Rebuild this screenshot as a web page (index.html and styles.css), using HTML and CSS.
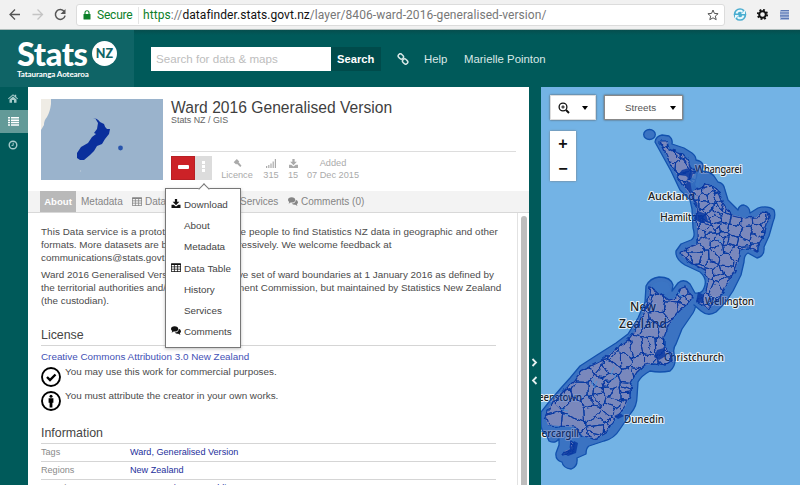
FILE: index.html
```html
<!DOCTYPE html>
<html lang="en">
<head>
<meta charset="utf-8">
<title>Ward 2016 Generalised Version</title>
<link rel="stylesheet" href="styles.css">
</head>
<body>
<svg class="defs" width="0" height="0">
  <symbol id="download" viewBox="0 0 16 16"><path d="M6 0h4v5h4L8 11 2 5h4zM0 10h4l4 3.5 4-3.5h4v6H0z"/></symbol>
  <symbol id="table" viewBox="0 0 16 14"><path fill-rule="evenodd" d="M1 0h14q1 0 1 1v12q0 1-1 1H1q-1 0-1-1V1q0-1 1-1zM1.200 3v2.500h3.500V3zm4.700 0v2.500h4.200V3zm5.400 0v2.500h3.500V3zM1.200 6.600v2.500h3.500V6.600zm4.700 0v2.500h4.200V6.600zm5.400 0v2.500h3.500V6.600zM1.200 10.200v2.600h3.500v-2.600zm4.700 0v2.600h4.200v-2.600zm5.400 0v2.600h3.500v-2.600z"/></symbol>
  <symbol id="comments" viewBox="0 0 18 15"><path d="M6.500 0C10.500 0 13 2 13 4.800S10.500 9.500 6.500 9.500L4.800 9.300Q3 11 .8 11 2.400 9.800 2.200 8.400 0 7 0 4.800C0 2 2.500 0 6.500 0zM14 4.500Q18 6 18 8.700 18 11 15.900 12.200 15.900 13.600 17.300 14.800 15 14.800 13.300 13.200 9 13.800 6.800 11 14 11 14 4.500z"/></symbol>
</svg>

<div class="browser">
  <svg class="nav-icons" width="72" height="30" viewBox="0 0 72 30" fill="none" stroke-width="1.300">
    <path stroke="#555" d="M20 14.500H10M15 9.500l-5 5 5 5"/>
    <path stroke="#c4c4c4" d="M32.500 14.500h10M37.500 9.500l5 5-5 5"/>
    <path stroke="#555" stroke-width="1.500" d="M64.300 11.600a4.900 4.900 0 1 0 .8 4"/>
    <path fill="#555" d="M65.500 9v5h-5z"/>
  </svg>
  <div class="address">
    <svg width="8" height="10" viewBox="0 0 8 10"><rect x=".5" y="4" width="7" height="5.500" rx=".5" fill="#0b8029"/><path d="M2 4.500V2.700a2 2 0 0 1 4 0v1.800" fill="none" stroke="#0b8029" stroke-width="1.100"/></svg>
    <span class="secure">Secure</span>
    <span class="url"><b>https</b>://<i>datafinder.stats.govt.nz</i>/layer/8406-ward-2016-generalised-version/</span>
    <svg class="star" width="12" height="12" viewBox="0 0 12 12"><path d="M6 1l1.400 3.400 3.700.3-2.800 2.400.9 3.600L6 8.800l-3.200 1.900.9-3.600L.9 4.700l3.700-.3z" fill="none" stroke="#555" stroke-width="1"/></svg>
  </div>
  <svg class="extensions" width="72" height="30" viewBox="728 0 72 30">
    <circle cx="740" cy="14.500" r="6.300" fill="#4aadd0"/>
    <path d="M736.500 13.500q1-3.500 4.500-2.700l1.500 1M743.500 15.500q-1 3.500-4.500 2.700l-1.500-1" fill="none" stroke="#e8f8fc" stroke-width="2"/>
    <path d="M741 14l4-4v4zM739 15l-4 4v-4z" fill="#e8f8fc"/>
    <circle cx="762.500" cy="14.500" r="3.300" fill="none" stroke="#111" stroke-width="2"/>
    <circle cx="762.500" cy="14.500" r="4.700" fill="none" stroke="#111" stroke-width="1.800" stroke-dasharray="1.850 1.841"/>
    <path d="M780 10h9v10h-9z" fill="#a9b9da"/>
    <path d="M781 10.500h8M780 13h9M780 15.800h9M781 18.500h8" stroke="#5b78b5" stroke-width="1.200"/>
  </svg>
</div>

<header class="header">
  <div class="brand">
    <div class="brand-row"><span class="stats">Stats</span><span class="nz">NZ</span></div>
    <div class="brand-sub">Tatauranga Aotearoa</div>
  </div>
  <div class="search-box">Search for data &amp; maps</div>
  <div class="search-button">Search</div>
  <svg class="link" width="12" height="12" viewBox="0 0 12 12" fill="none" stroke="#d5e6e5" stroke-width="1.500"><rect x="1" y="1.500" width="5.600" height="4.200" rx="2" transform="rotate(45 4 3.600)"/><rect x="5.400" y="6.300" width="5.600" height="4.200" rx="2" transform="rotate(45 8 8.400)"/></svg>
  <span class="help">Help</span>
  <span class="user">Marielle Pointon</span>
</header>

<div class="workspace">
  <nav class="rail">
    <div class="rail-item"><svg width="10" height="9" viewBox="0 0 10 9" fill="#a7cbca"><path d="M5 .3l1.800 1.500V.7h1.400V3L10 4.600l-.6.600L5 1.600.6 5.200 0 4.600zM5 2.500l3.500 2.900v3.300H6V6H4v2.700H1.500V5.400z"/></svg></div>
    <div class="rail-item active"><svg width="11" height="9" viewBox="0 0 11 9" fill="#fff"><path d="M0 0h2v1.500H0zm3 0h8v1.500H3zM0 2.400h2v1.500H0zm3 0h8v1.500H3zM0 4.800h2v1.500H0zm3 0h8v1.500H3zM0 7.200h2v1.500H0zm3 0h8v1.500H3z"/></svg></div>
    <div class="rail-item"><svg width="10" height="10" viewBox="0 0 10 10" fill="none" stroke="#a7cbca"><circle cx="5" cy="5" r="3.800" stroke-width="1.400"/><path d="M5.200 2.700v2.700H3.500"/></svg></div>
  </nav>

  <main class="panel">
    <section class="summary">
      <svg class="thumb" width="122" height="81" viewBox="0 0 122 81">
        <rect width="122" height="81" fill="#9ab3cc"/>
        <path d="M0 0h10v5q-1 8-4 13-3 3-3 8l-3 5z" fill="#efece5"/>
        <path d="M52 19q4 0 7 4l4 2q1 4 3 5l3 0-1 5-4 5-3 5-5 2-3 5-4 4-6 5-4 0-3-2 0-5 4-6 7-4 4-6 4-3-2-1 3-4 1-6-3-5z" fill="#0a2f9c"/>
        <circle cx="79.500" cy="49" r="2.400" fill="#2854ac"/><circle cx="39.500" cy="72" r=".7" fill="#bccbd9"/>
      </svg>
      <div class="facts">
        <h1>Ward 2016 Generalised Version</h1>
        <div class="owner">Stats NZ / GIS</div>
        <div class="meta">
          <div class="remove"><span></span></div>
          <div class="more"><i></i><i></i><i></i></div>
          <div class="stat licence"><svg width="10" height="10" viewBox="0 0 10 10"><path d="M4.800 0L7.500 2.700l-.8.800.6.600L10 7.500 8.600 9 5.500 5.900l-.7-.6-.7.800L1.300 3.500l.8-.8z"/></svg><span>Licence</span></div>
          <div class="stat views"><svg width="10" height="9" viewBox="0 0 10 9"><path d="M0 7h1.200v2H0zM2.200 6h1.200v3H2.200zM4.400 4.500h1.200V9H4.400zM6.600 2.500h1.200V9H6.600zM8.800 0H10v9H8.800z"/></svg><span>315</span></div>
          <div class="stat downloads"><svg width="9" height="9"><use href="#download"/></svg><span>15</span></div>
          <div class="stat added"><span>Added</span><span>07 Dec 2015</span></div>
        </div>
      </div>
    </section>

    <div class="tabs">
      <span class="tab current">About</span>
      <span class="tab t-meta">Metadata</span>
      <span class="tab t-data"><svg width="10" height="9"><use href="#table"/></svg>Data Table</span>
      <span class="tab t-serv">Services</span>
      <span class="tab t-comm"><svg width="10" height="9"><use href="#comments"/></svg>Comments (0)</span>
    </div>

    <div class="scroll">
      <div class="content">
        <p><span class="l1">This Data service is a prototype built to enable people to find Statistics NZ data in geographic and other</span><br><span>formats. More datasets are being added progressively. We welcome feedback at</span><br><span>communications@stats.govt.nz</span></p>
        <p><span>Ward 2016 Generalised Version is the definitive set of ward boundaries at 1 January 2016 as defined by</span><br><span>the territorial authorities and/or Local Government Commission, but maintained by Statistics New Zealand</span><br><span>(the custodian).</span></p>
        <h2 class="license">License</h2>
        <a class="cc">Creative Commons Attribution 3.0 New Zealand</a>
        <div class="term"><svg width="20" height="20" viewBox="0 0 20 20"><circle cx="10" cy="10" r="9" fill="#fff" stroke="#000" stroke-width="1.900"/><path d="M6 10l3 3 5.500-5.500" fill="none" stroke="#000" stroke-width="2.400"/></svg><span>You may use this work for commercial purposes.</span></div>
        <div class="term"><svg width="20" height="20" viewBox="0 0 20 20"><circle cx="10" cy="10" r="9" fill="#fff" stroke="#000" stroke-width="1.900"/><circle cx="10" cy="5.300" r="1.500"/><path d="M7.600 7.200h4.800v4.500h-1v4.800H8.600v-4.800h-1z"/></svg><span>You must attribute the creator in your own works.</span></div>
        <h2 class="information">Information</h2>
        <div class="row"><span>Tags</span><a>Ward, Generalised Version</a></div>
        <div class="row"><span>Regions</span><a>New Zealand</a></div>
        <div class="row"><span>Metadata</span><a>ISO 19115/19139, Dublin Core</a></div>
      </div>
      <div class="track"><div class="thumb-bar"></div></div>
    </div>

    <div class="menu">
      <div><svg width="10" height="9"><use href="#download"/></svg>Download</div>
      <div>About</div>
      <div>Metadata</div>
      <div><svg width="10" height="9"><use href="#table"/></svg>Data Table</div>
      <div>History</div>
      <div>Services</div>
      <div><svg width="10" height="9"><use href="#comments"/></svg>Comments</div>
    </div>
  </main>

  <div class="splitter">
    <svg width="7" height="9" viewBox="0 0 7 9"><path d="M1.500 1l3.500 3.500L1.500 8"/></svg>
    <svg width="7" height="9" viewBox="0 0 7 9"><path d="M5.500 1L2 4.500 5.500 8"/></svg>
  </div>

  <section class="map">
    <svg class="canvas" width="259" height="398" viewBox="541 87 259 398">
      <defs>
        <path id="north" d="M660 141L667 141 669 150 682 154 688 160 691 168 697 174 694 186 700 190 706 184 718 190 721 199 726 208 733 215 745 218 757 217 761 212 768 213 770 218 766 224 763 237 757 247 757 252 749 248 740 250 738 262 734 273 725 288 718 300 708 309 698 302 699 298 706 292 708 280 704 270 692 263 682 256 681 253 686 248 697 244 697 230 696 217 697 205 688 192 680 180 670 163 664 150z"/>
        <path id="south" d="M686 286L692 298 686 305 675 315 668 327 664 337 664 346 670 353 671 361 665 365 655 363 645 365 637 372 631 382 630 395 625 407 617 417 610 425 606 433 595 439 583 436 575 427 560 426 548 425 545 417 550 406 562 393 575 380 580 372 600 362 615 350 628 340 637 328 641 318 647 305 649 295 650 286 660 294 669 300 676 298 680 288z"/>
        <path id="stewart" d="M571 441L575 444 575 450 570 454 562 455 565 451 570 449z"/>
        <clipPath id="land"><use href="#north"/><use href="#south"/><use href="#stewart"/></clipPath>
        <filter id="rough" x="-5%" y="-5%" width="110%" height="110%"><feTurbulence type="fractalNoise" baseFrequency=".13" numOctaves="2" seed="4"/><feDisplacementMap in="SourceGraphic" scale="6" xChannelSelector="R" yChannelSelector="G"/></filter>
      </defs>
      <rect x="541" y="87" width="259" height="398" fill="#73b3e5"/>
      <g fill="#f0dcd8"><use href="#north"/><use href="#south"/><use href="#stewart"/></g>
      <g class="places">
        <text x="695" y="173" textLength="47">Whangarei</text>
        <text class="big" x="648" y="200" textLength="47">Auckland</text>
        <text class="mid" x="660" y="221" textLength="44">Hamilton</text>
        <text x="705" y="305" textLength="49">Wellington</text>
        <text class="large" x="630" y="311" textLength="26">New</text>
        <text class="large" x="619" y="328" textLength="48">Zealand</text>
        <text x="664" y="361" textLength="60">Christchurch</text>
        <text x="624" y="423" textLength="40">Dunedin</text>
        <text x="525" y="401" textLength="57">Queenstown</text>
        <text x="527" y="437" textLength="52">Invercargill</text>
      </g>
      <g fill="#0333a0" fill-opacity=".5" stroke="#1251ae" stroke-width="1.300" stroke-linejoin="round">
        <path d="M655 142Q656 136 662 135L669 136Q673 139 672 144L684 148 692 153Q696 156 696 160 702 161 703 165L702 171Q711 172 714 176L718 182Q724 183 725 190L728 200 735 207 738 210Q739 205 744 205 750 207 750 213L758 208Q768 205 774 210 776 216 773 222L769 236 764 247Q765 256 757 258L748 253Q744 255 744 262L741 275 733 291 725 303 716 312Q708 317 701 311L694 305Q697 306 693 313L682 329 676 344Q672 349 675 357 676 366 670 371 660 373 650 371 641 376 638 382L637 397Q637 406 631 413L620 429Q614 439 604 441L589 446Q586 448 586 454L577 458Q578 467 571 469 563 468 562 462 555 460 556 453L559 445 559 439Q555 444 549 441L546 434Q541 432 541 423L541 412 549 402 561 388 570 378 580 366 597 355 616 343 628 334 638 318 645 302 646 286Q650 278 659 277 671 277 673 285L672 291 678 283Q684 278 690 284L695 293Q702 294 704 288 708 279 700 272L685 265Q675 259 676 251L681 244 691 240Q696 237 693 228L692 209 690 200 680 190 671 171z"/>
        <ellipse cx="649.500" cy="134.500" rx="5.800" ry="5"/>
      </g>
      <g filter="url(#rough)"><g clip-path="url(#land)"><path id="wards" fill="none" stroke="#0838a2" stroke-width="1"/></g>
      <g fill="none" stroke="#0838a2" stroke-width="1.200"><use href="#north"/><use href="#south"/><use href="#stewart"/></g></g>
      <g fill="#0838a2" opacity=".85"><path d="M689 168l4 5-2 8-5-5-8-1 4-5zM687 181l8 3 2 5-7 3-5-5zM698 211l8 3 2 7-7 2-7-4zM698 292l6 3-1 8-7-1zM657 350l7-2 2 8-7 4-5-3zM563 453l7-4 4-8 4 2-2 10-8 3zM614 416l6-3 4 3-6 3z"/></g>
      <path d="M690 180l7-9 4 3-2 12-7 6z" fill="#3b77c5" opacity=".8"/>
      <path d="M651 286q8-7 17-3l3 7-6 5-8-4z" fill="#3b77c5" opacity=".5"/>
      <g fill="none" stroke="#4f94d8" stroke-width="1.300" opacity=".8"><path d="M614 367l-3 8m5-1l-2 6M594 378l-2 7m5-4l-3 7M561 409l7 2M565 416l4-2M678 292l4 5M718 239l4 3"/></g>
    </svg>
    <div class="map-bar">
      <div class="map-button"><svg width="12" height="12" viewBox="0 0 12 12" fill="none" stroke="#111"><circle cx="5" cy="5" r="3.900" stroke-width="1.300"/><path d="M8 8l3 3" stroke-width="2"/><path d="M3.300 5h3.400M5 3.300v3.400"/></svg><b class="caret"></b></div>
      <div class="map-button streets"><span>Streets</span><b class="caret"></b></div>
    </div>
    <div class="zoomer"><span>+</span><span>−</span></div>
  </section>
</div>
<script src="wards.js"></script>
</body>
</html>
```

FILE: styles.css
```css
* { box-sizing: border-box; }
body { margin: 0; width: 800px; height: 485px; overflow: hidden; display: flex; flex-direction: column; background: #fff; font-family: "Liberation Sans", sans-serif; color: #4b4b4b; font-size: 9.87px; white-space: nowrap; }
svg { display: block; flex: none; }
.defs { position: absolute; }

.browser { height: 30px; flex: none; display: flex; background: #f1f1f1; border-bottom: 1px solid #aebcba; }
.address { width: 649px; height: 22px; margin: 4px 0 0 4px; padding-left: 6px; display: flex; align-items: center; background: #fff; border: 1px solid #dcdcdc; border-radius: 3px; font: 12px Roboto, sans-serif; }
.secure { color: #0b8029; margin-left: 6px; width: 42px; border-right: 1px solid #e5e5e5; line-height: 17px; letter-spacing: -0.2px; }
.url { color: #777; margin-left: 4px; letter-spacing: 0.06px; }
.url b { font-weight: 400; color: #0b8029; }
.url i { font-style: normal; color: #111; }
.star { margin-left: auto; margin-right: 5px; }
.extensions { margin-left: 3px; }

.header { height: 57px; flex: none; display: flex; align-items: center; background: linear-gradient(#064e4e, #005a5a 5px); color: #d9e8e7; font-size: 11.4px; }
.brand { width: 134px; height: 57px; padding: 8px 0 0 17px; background: #0f6466; color: #fff; }
.brand-row { display: flex; height: 32px; }
.stats { font: 900 32.5px/31px Lato, sans-serif; width: 75px; letter-spacing: -0.4px; }
.nz { width: 25px; height: 25px; margin-top: 3px; border-radius: 50%; background: #fff; color: #0f6466; font: 900 12.5px/25px Lato, sans-serif; text-align: center; }
.brand-sub { font: 700 8px/9px Lato, sans-serif; letter-spacing: -0.1px; }
.search-box { width: 180px; height: 24px; margin-left: 17px; padding-left: 5px; line-height: 24px; background: #fff; color: #bdbdbd; font-size: 11.6px; }
.search-button { width: 50px; height: 24px; padding-left: 6px; line-height: 24px; background: #004b4b; color: #fff; font-weight: 700; font-size: 11.2px; }
.link { margin-left: 16px; }
.help { margin-left: 15px; width: 25px; }
.user { margin-left: 15px; }

.workspace { flex: 1; display: flex; min-height: 0; }
.rail { width: 28px; background: #005a5a; }
.rail-item { height: 23px; display: flex; align-items: center; justify-content: center; padding-right: 2px; }
.rail-item.active { background: #639a98; }
.panel { width: 501px; background: #fff; position: relative; display: flex; flex-direction: column; }
.summary { height: 104px; flex: none; display: flex; padding: 12px 13px 0; gap: 8px; }
.facts { flex: 1; }
h1 { margin: 0; font-weight: 400; font-size: 15.65px; line-height: 17px; color: #3f3f3f; }
.owner { font-size: 8.9px; line-height: 9px; color: #666; }
.meta { height: 33px; margin-top: 26px; padding-top: 4px; border-top: 1px solid #ddd; display: flex; color: #aaa; }
.remove { width: 24px; height: 24px; background: #cc2227; border: 1px solid #b81f24; display: grid; place-items: center; }
.remove span { width: 11px; height: 4px; background: #fff; border-radius: 1px; margin-bottom: 2px; }
.more { width: 17px; height: 24px; background: #dcdcdc; display: flex; flex-direction: column; align-items: center; padding-top: 5px; gap: 1px; }
.more i { width: 3px; height: 3px; background: #fff; }
.stat { height: 24px; display: flex; flex-direction: column; align-items: center; justify-content: space-between; fill: #aaa; padding-top: 3px; font-size: 9.2px; line-height: 9px; }
.stat svg { max-height: 9px; }
.licence { width: 32px; margin-left: 9px; }
.views { width: 16px; margin-left: 10px; }
.downloads { width: 12px; margin-left: 8px; }
.added { width: 52px; margin-left: 8px; }

.tabs { height: 22px; flex: none; display: flex; padding-left: 12px; background: #f3f3f3; border-bottom: 1px solid #d8d8d8; color: #858585; fill: #858585; line-height: 20px; font-size: 10px; }
.tab { display: flex; align-items: center; gap: 3px; height: 21px; }
.tab.current { width: 36px; justify-content: center; background: #b9b9b9; color: #fff; font-weight: 700; font-size: 9.6px; }
.t-meta { margin-left: 5px; width: 51px; }
.t-data { width: 108px; }
.t-serv { width: 48px; }

.scroll { flex: 1; min-height: 0; display: flex; overflow: hidden; }
.content { width: 455px; margin-left: 13px; height: 272px; padding-top: 12px; flex: none; }
p { margin: 0 0 4px; line-height: 13px; }
.l1 { letter-spacing: 0.06px; }
h2 { font-weight: 400; font-size: 12.4px; line-height: 20px; margin: 0; border-bottom: 1px solid #d5d5d5; color: #454545; height: 21px; }
.license { margin-top: 18px; }
.cc { display: block; color: #3f51b5; line-height: 13px; margin-top: 4px; height: 17px; }
.term { height: 24px; display: flex; gap: 4px; }
.term span { line-height: 10px; }
.information { margin-top: 8px; }
.row { display: flex; height: 18px; border-bottom: 1px solid #d5d5d5; line-height: 17px; font-size: 9.1px; color: #8a8a8a; }
.row span { width: 89px; }
.row a { color: #24309c; }
.track { width: 12px; margin-left: 21px; border-left: 1px solid #e2e2e2; padding: 3px 0 0 3px; }
.thumb-bar { width: 6px; height: 280px; border-radius: 3px; background: #bdbdbd; }

.menu { position: absolute; left: 137px; top: 101px; width: 76px; height: 160px; padding-top: 5px; background: #fff; border: 1px solid #777; box-shadow: 0 1px 3px #8888; fill: #111; color: #444; }
.menu div { height: 21.200px; padding-left: 18px; line-height: 21px; position: relative; }
.menu svg { position: absolute; left: 5px; top: 5px; }
.menu::before { content: ""; position: absolute; left: 34px; top: -4px; width: 7px; height: 7px; background: #fff; border: 1px solid #777; border-right: 0; border-bottom: 0; transform: rotate(45deg); }

.splitter { width: 12px; background: #005a5a; padding: 271px 0 0 2px; }
.splitter svg { margin-bottom: 9px; fill: none; stroke: #e5efef; stroke-width: 1.8; }
.map { width: 259px; position: relative; overflow: hidden; background: #73b3e5; }
.canvas { position: absolute; left: 0; top: 0; }
.places { font: 500 10px "Noto Sans", sans-serif; fill: #222; stroke: #ffffffcc; stroke-width: 2.2px; paint-order: stroke; stroke-linejoin: round; }
.places .mid { font-size: 10.5px; }
.places .big { font-size: 11px; }
.places .large { font-size: 12px; }
.map-bar { position: relative; display: flex; gap: 8px; padding: 8px 0 0 9px; }
.map-button { width: 46px; height: 25px; display: flex; align-items: center; justify-content: space-between; padding: 0 7px 0 7px; background: #fff; border: 1px solid #ddd; box-shadow: 0 0 2px #555; }
.streets { width: 79px; padding: 0 6px 0 20px; border-color: #888; color: #555; }
.caret { border: 3px solid transparent; border-top: 4px solid #000; border-bottom: 0; }
.zoomer { position: relative; width: 26px; height: 50px; margin: 11px 0 0 9px; background: #fff; box-shadow: 0 0 2px #777; display: flex; flex-direction: column; font: 700 16px/25px "Liberation Sans", sans-serif; color: #111; text-align: center; }
```

FILE: wards.js
```js
// Ward boundaries: Voronoi cells around jittered centres, denser near the cities.
let state = 17;
const rand = () => (state = (state * 16807) % 2147483647) / 2147483647;
const areas = [
  [658, 140, 700, 185, 10], [690, 185, 725, 240, 8], [716, 200, 772, 258, 12],
  [680, 240, 755, 310, 11], [640, 280, 695, 345, 14], [580, 340, 675, 380, 13],
  [590, 380, 640, 440, 10], [540, 380, 590, 440, 20], [560, 440, 580, 458, 6]
];
const points = [];
for (const [x0, y0, x1, y1, step] of areas)
  for (let y = y0; y < y1; y += step)
    for (let x = x0; x < x1; x += step)
      points.push([x + rand() * step, y + rand() * step]);
let d = "";
for (const p of points) {
  let cell = [[p[0] - 25, p[1] - 25], [p[0] + 25, p[1] - 25], [p[0] + 25, p[1] + 25], [p[0] - 25, p[1] + 25]];
  for (const q of points) {
    if (q === p || Math.hypot(q[0] - p[0], q[1] - p[1]) > 70) continue;
    const nx = q[0] - p[0], ny = q[1] - p[1];
    const side = v => (v[0] - (p[0] + q[0]) / 2) * nx + (v[1] - (p[1] + q[1]) / 2) * ny;
    const next = [];
    cell.forEach((a, i) => {
      const b = cell[(i + 1) % cell.length], sa = side(a), sb = side(b);
      if (sa <= 0) next.push(a);
      if ((sa < 0) !== (sb < 0) && sa !== sb) {
        const t = sa / (sa - sb);
        next.push([a[0] + (b[0] - a[0]) * t, a[1] + (b[1] - a[1]) * t]);
      }
    });
    cell = next;
  }
  if (cell.length) d += "M" + cell.map(v => v[0].toFixed(1) + " " + v[1].toFixed(1)).join("L") + "z";
}
document.getElementById("wards").setAttribute("d", d);
```
